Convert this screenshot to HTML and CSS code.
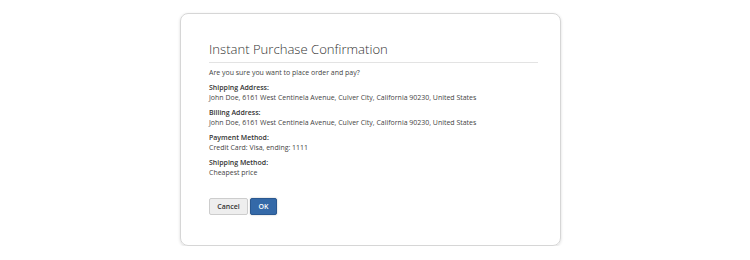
FILE: index.html
```html
<!DOCTYPE html>
<html>
<head>
  <title>Instant Purchase Confirmation</title>
  <meta charset="UTF-8" />
  <link rel="stylesheet" href="styles.css">
</head>
<body>
  <div class="modal">
    <h1 class="modal-title">Instant Purchase Confirmation</h1>
    <p class="question">Are you sure you want to place order and pay?</p>

    <div class="group">
      <b>Shipping Address:</b>
      <span>John Doe, 6161 West Centinela Avenue, Culver City, California 90230, United States</span>
    </div>
    <div class="group">
      <b>Billing Address:</b>
      <span>John Doe, 6161 West Centinela Avenue, Culver City, California 90230, United States</span>
    </div>
    <div class="group">
      <b>Payment Method:</b>
      <span>Credit Card: Visa, ending: 1111</span>
    </div>
    <div class="group">
      <b>Shipping Method:</b>
      <span>Cheapest price</span>
    </div>

    <div class="actions">
      <button class="btn cancel">Cancel</button>
      <button class="btn ok">OK</button>
    </div>
  </div>
</body>
</html>
```

FILE: styles.css
```css
body {
  margin: 0;
  background: #ffffff;
  font-family: "Open Sans", sans-serif;
  color: #444;
}
.modal {
  box-sizing: border-box;
  width: 381px;
  height: 233px;
  margin: 13px 0 0 180px;
  padding: 26px 22px 0 28px;
  border: 1px solid #d6d6d6;
  border-radius: 8px;
  box-shadow: 0 1px 3px rgba(0, 0, 0, 0.15);
}
.modal-title {
  margin: 0;
  padding-bottom: 4px;
  border-bottom: 1px solid #e3e3e3;
  font-size: 13.1px;
  font-weight: 300;
  line-height: 18px;
  color: #333;
}
.question {
  margin: 5px 0 0;
  font-size: 6.98px;
  line-height: 10px;
}
.group {
  margin-top: 5px;
  font-size: 6.98px;
  line-height: 10px;
}
.group b,
.group span {
  display: block;
}
.group b {
  font-weight: 600;
  color: #333;
}
.actions {
  margin-top: 20px;
  display: flex;
  gap: 2px;
}
.btn {
  height: 17px;
  padding: 0;
  font-family: "Open Sans", sans-serif;
  font-size: 6.98px;
  font-weight: 600;
  border-radius: 2px;
}
.cancel {
  width: 39px;
  background: #eeeeee;
  border: 1px solid #cdcdcd;
  color: #333;
}
.ok {
  width: 27px;
  background: #3469a8;
  border: 1px solid #2a5890;
  color: #ffffff;
  box-shadow: 0 0 2px rgba(0, 0, 0, 0.25);
}
```
